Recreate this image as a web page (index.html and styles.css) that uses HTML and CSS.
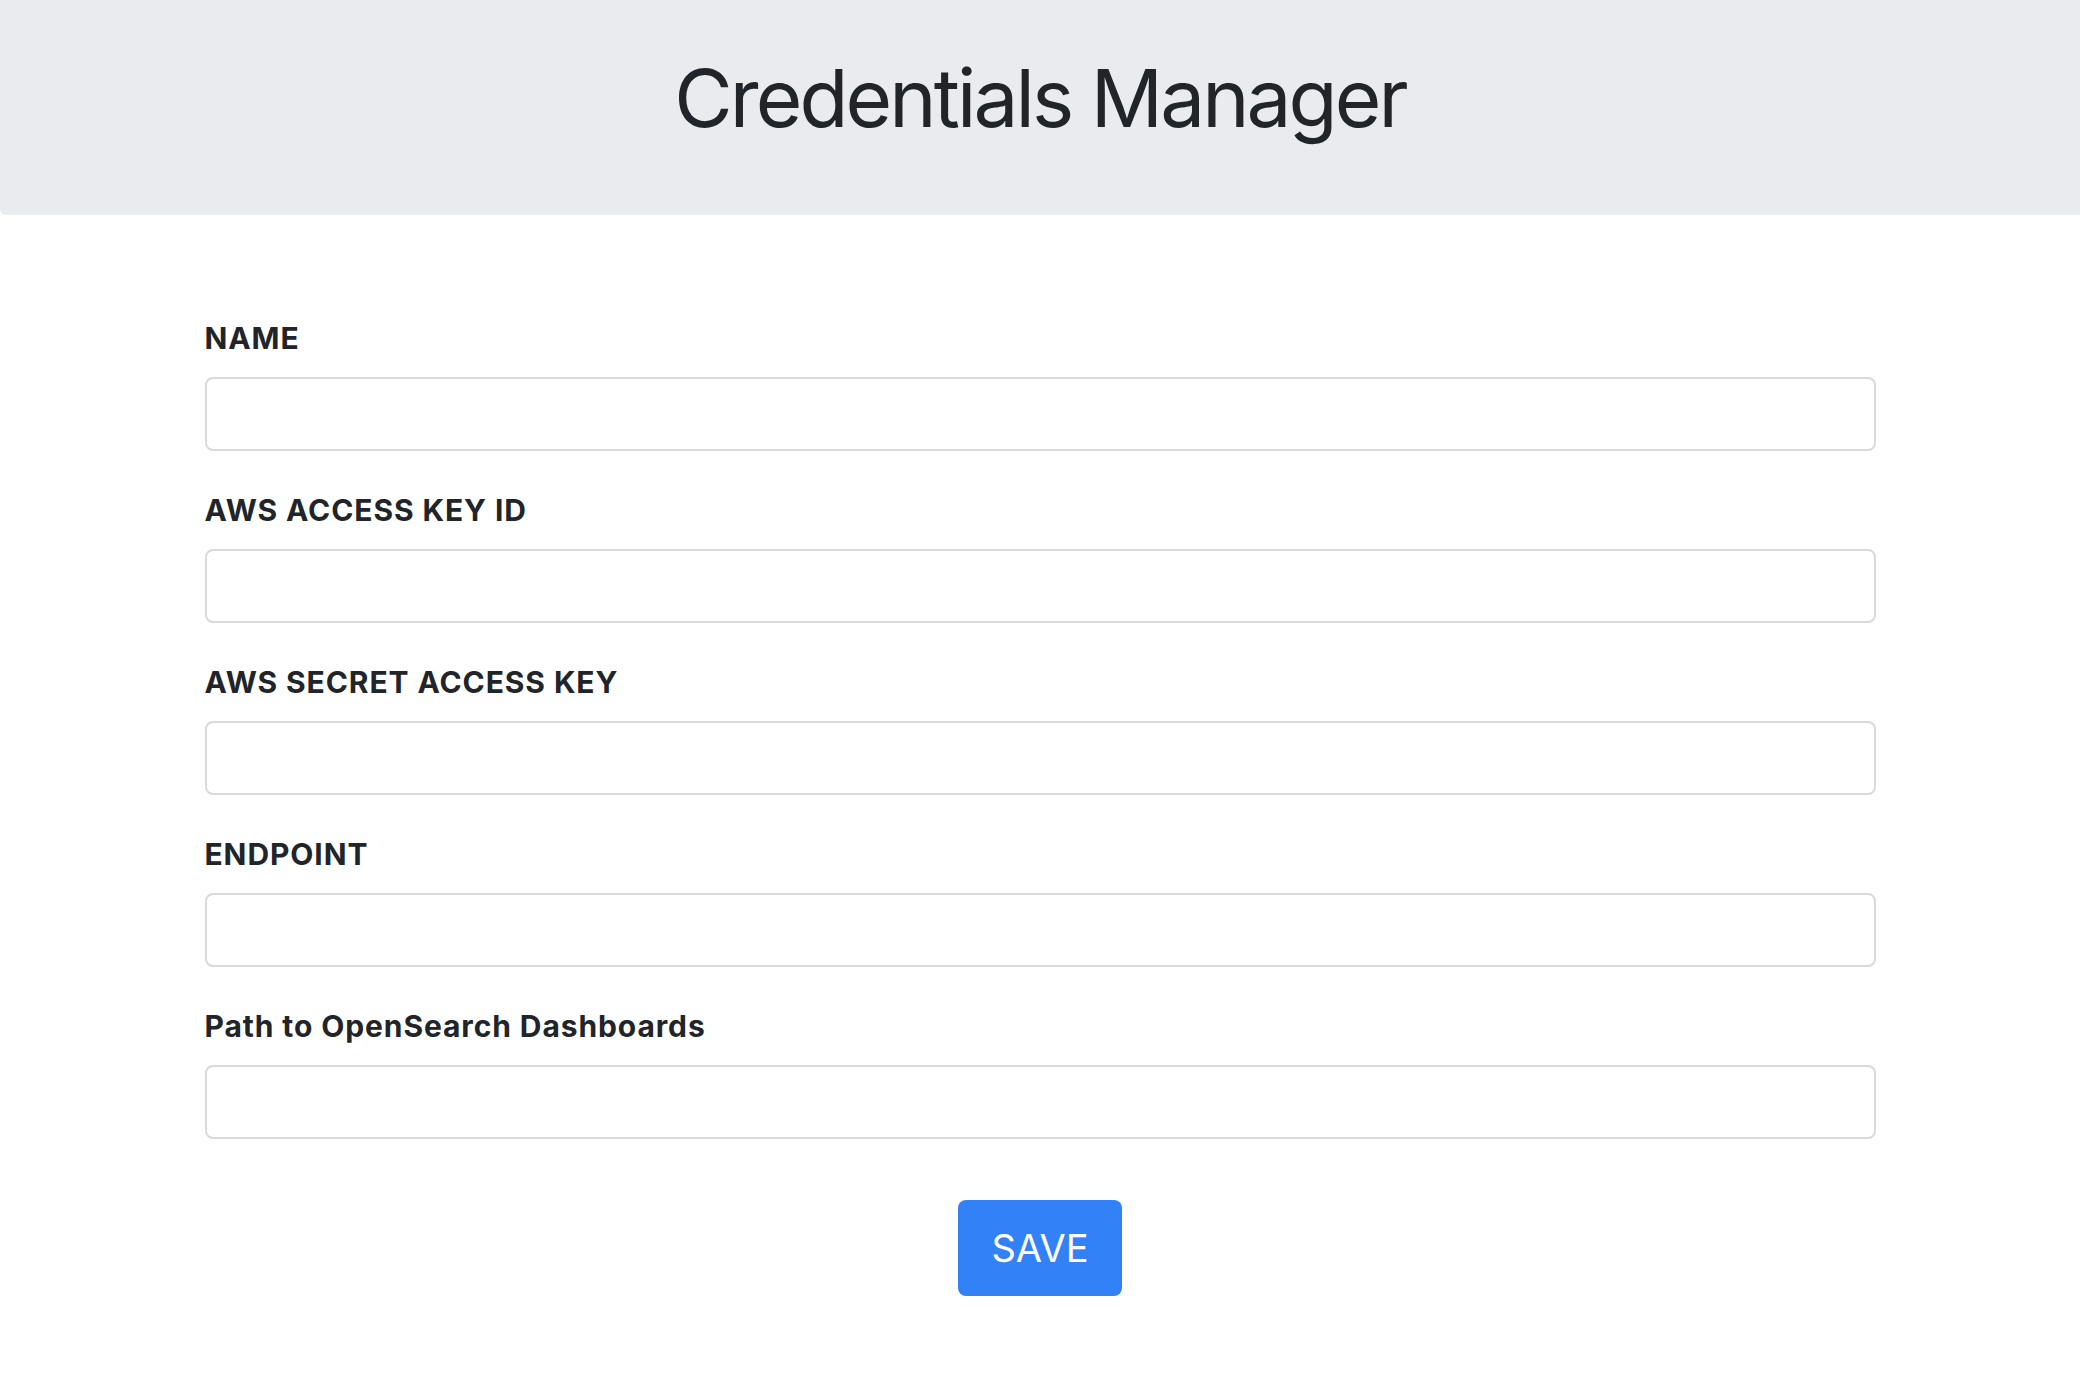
FILE: index.html
```html
<!DOCTYPE html>
<html lang="en">
<head>
<meta charset="utf-8">
<title>Credentials Manager</title>
<link rel="stylesheet" href="styles.css">
</head>
<body>
<header class="hero">
  <h1 class="hero-title">Credentials Manager</h1>
</header>
<main class="main">
  <form class="form">
    <div class="field">
      <label class="label" for="name">NAME</label>
      <input class="input" id="name" type="text">
    </div>
    <div class="field">
      <label class="label" for="akid">AWS ACCESS KEY ID</label>
      <input class="input" id="akid" type="text">
    </div>
    <div class="field">
      <label class="label" for="sak">AWS SECRET ACCESS KEY</label>
      <input class="input" id="sak" type="text">
    </div>
    <div class="field">
      <label class="label" for="endpoint">ENDPOINT</label>
      <input class="input" id="endpoint" type="text">
    </div>
    <div class="field">
      <label class="label" for="path">Path to OpenSearch Dashboards</label>
      <input class="input" id="path" type="text">
    </div>
    <div class="actions">
      <button class="btn" type="button">SAVE</button>
    </div>
  </form>
</main>
</body>
</html>
```
FILE: styles.css
```css
* { box-sizing: border-box; }
html, body { margin: 0; padding: 0; background: #ffffff; }
body {
  font-family: Inter, "Noto Sans", "Liberation Sans", sans-serif;
  color: #212529;
}
.hero {
  height: 215px;
  background: #e9ebef;
  border-bottom-left-radius: 6px;
  display: flex;
  align-items: center;
  justify-content: center;
}
.hero-title {
  margin: 0;
  font-size: 80px;
  font-weight: 400;
  letter-spacing: -2.9px;
  line-height: 1;
  color: #212529;
  transform: translateY(-10px);
}
.main {
  padding-top: 102px;
}
.form {
  width: 1671px;
  margin: 0 auto;
  display: flex;
  flex-direction: column;
  gap: 38px;
}
.field {
  display: flex;
  flex-direction: column;
}
.label {
  font-size: 30px;
  font-weight: 700;
  letter-spacing: 0.9px;
  line-height: 42px;
  margin-bottom: 18px;
  color: #212529;
}
.input {
  height: 74px;
  width: 100%;
  border: 2px solid #d9d9d9;
  border-radius: 8px;
  background: #fff;
  font-family: inherit;
  font-size: 28px;
  padding: 0 16px;
}
.actions {
  display: flex;
  justify-content: center;
  margin-top: 23px;
}
.btn {
  width: 164px;
  height: 96px;
  border: none;
  border-radius: 8px;
  background: #3381f6;
  color: #ffffff;
  font-family: inherit;
  font-size: 38px;
  font-weight: 400;
}
```
